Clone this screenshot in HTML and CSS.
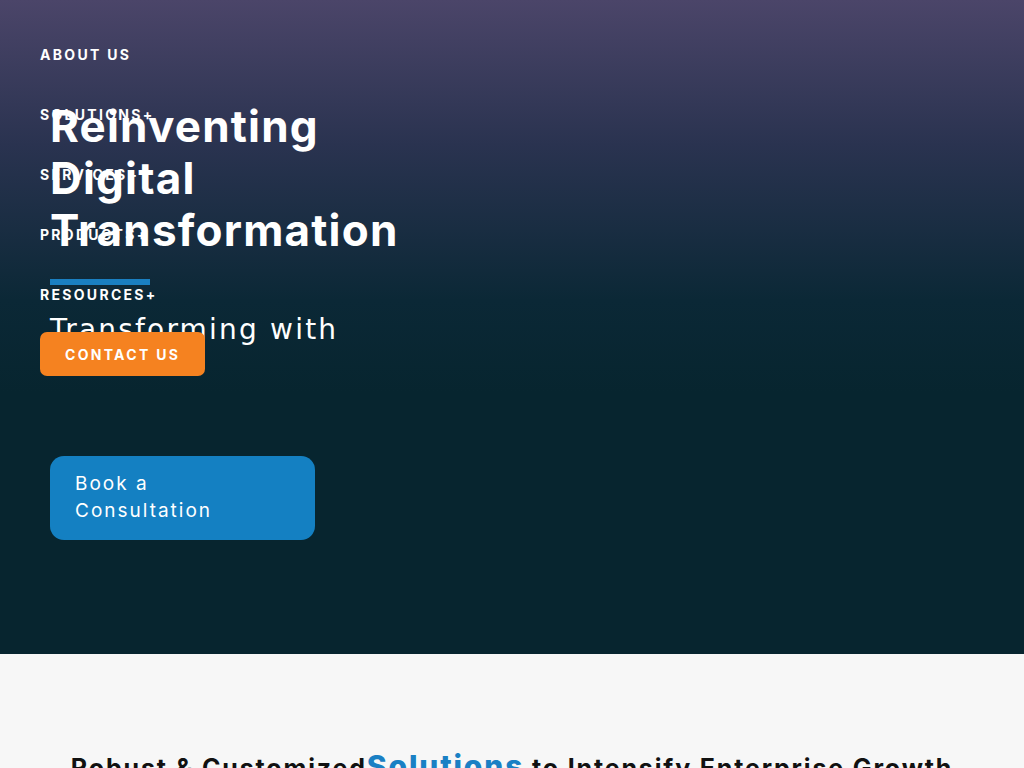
FILE: index.html
```html
<!DOCTYPE html>
<html lang="en">
<head>
    <meta charset="UTF-8">
    <meta name="viewport" content="width=device-width, initial-scale=1.0">
    <title>Reinventing Digital Transformation</title>
    <link rel="stylesheet" href="styles.css">
</head>
<body>
    <header class="hero">
        <nav class="site-nav">
            <ul>
                <li><a href="#">About Us</a></li>
                <li><a href="#">Solutions+</a></li>
                <li><a href="#">Services+</a></li>
                <li><a href="#">Products+</a></li>
                <li><a href="#">Resources+</a></li>
                <li><a href="#" class="btn-contact">Contact Us</a></li>
            </ul>
        </nav>

        <div class="hero-content">
            <h1>Reinventing<br>Digital<br>Transformation</h1>
            <span class="hero-bar"></span>
            <p class="tagline">Transforming with</p>
            <a href="#" class="btn-book">Book a<br>Consultation</a>
        </div>
    </header>

    <section class="solutions">
        <h2>Robust &amp; Customized<span class="accent">Solutions</span> to Intensify Enterprise Growth</h2>
    </section>
</body>
</html>
```

FILE: styles.css
```css
body {
    margin: 0;
    font-family: Inter, "Open Sans", sans-serif;
    background-color: #f7f7f7;
}
.hero {
    position: relative;
    height: 654px;
    box-sizing: border-box;
    background: linear-gradient(to bottom, #4b4569 0%, #2a3350 22%, #0b2836 46%, #07252f 60%, #07252f 100%);
    color: #fff;
}
.site-nav {
    position: absolute;
    top: 24px;
    left: 40px;
    z-index: 1;
}
.site-nav ul {
    list-style: none;
    margin: 0;
    padding: 0;
}
.site-nav li {
    height: 60px;
    display: flex;
    align-items: center;
}
.site-nav a {
    color: #fff;
    text-decoration: none;
    text-transform: uppercase;
    font-size: 14px;
    font-weight: 700;
    letter-spacing: 2.3px;
}
.site-nav .btn-contact {
    display: inline-flex;
    align-items: center;
    height: 44px;
    padding: 0 25px;
    background-color: #f58220;
    border-radius: 7px;
}
.hero-content {
    padding: 100px 0 0 50px;
}
.hero-content h1 {
    position: relative;
    z-index: 2;
    margin: 0;
    font-size: 44px;
    line-height: 52px;
    font-weight: 700;
    letter-spacing: 1.2px;
}
.hero-bar {
    display: block;
    width: 100px;
    height: 6px;
    margin-top: 23px;
    background-color: #1a7fc1;
}
.tagline {
    margin: 25px 0 0;
    font-family: "DejaVu Sans", sans-serif;
    font-size: 28px;
    line-height: 40px;
    letter-spacing: 2.2px;
}
.btn-book {
    display: block;
    width: 265px;
    box-sizing: border-box;
    margin-top: 106px;
    padding: 14px 25px 16px;
    background-color: #1480c2;
    border-radius: 14px;
    color: #fff;
    text-decoration: none;
    font-size: 19px;
    line-height: 27px;
    letter-spacing: 2px;
}
.solutions {
    padding: 94px 20px 60px;
    text-align: center;
}
.solutions h2 {
    margin: 0;
    font-size: 25px;
    font-weight: 700;
    letter-spacing: 1.85px;
    color: #111;
}
.solutions .accent {
    color: #1a80c4;
    font-size: 30px;
    font-weight: 800;
}
```
